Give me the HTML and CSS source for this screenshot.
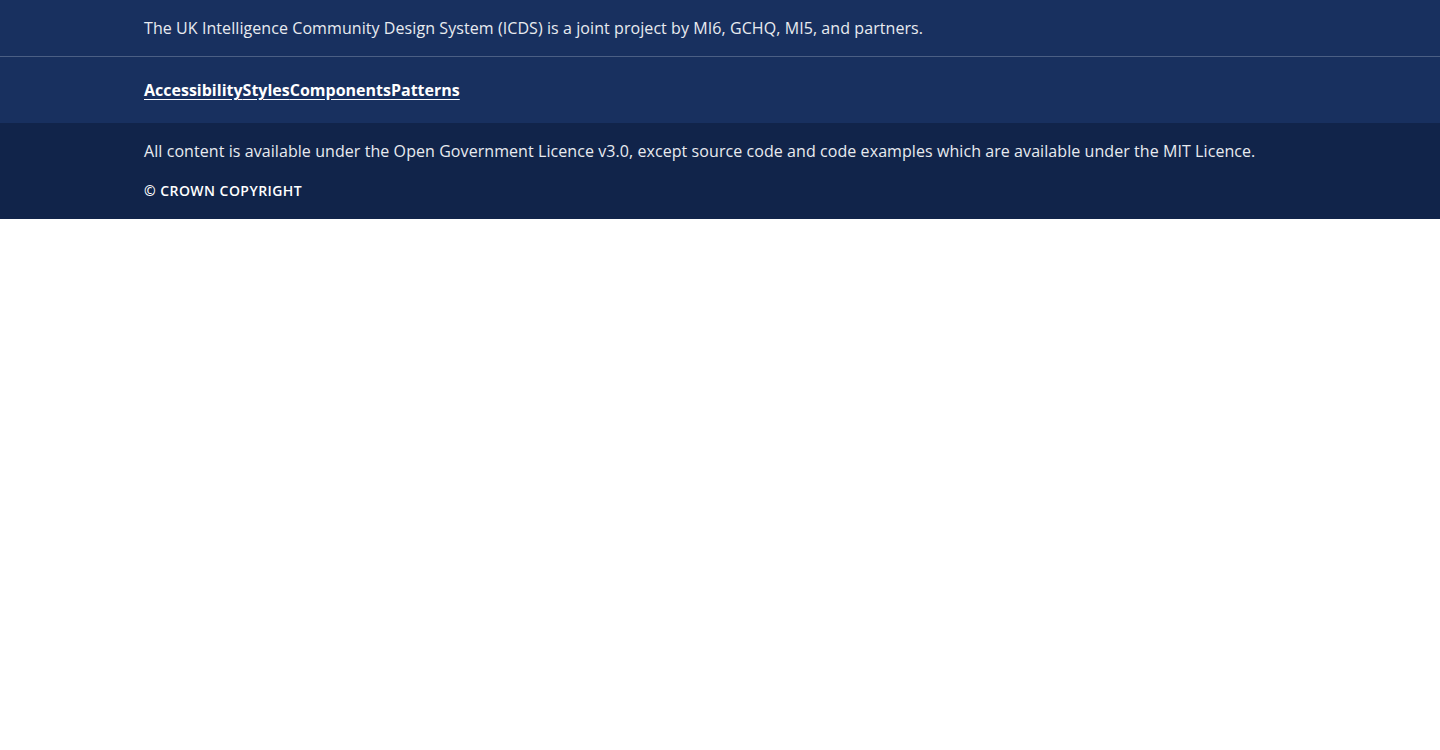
FILE: index.html
```html
<!DOCTYPE html>
<html lang="en">
<head>
<meta charset="utf-8">
<title>ICDS footer</title>
<link rel="stylesheet" href="styles.css">
</head>
<body>
<footer class="footer">
  <div class="footer-top">
    <div class="container">
      <p class="intro">The UK Intelligence Community Design System (ICDS) is a joint project by MI6, GCHQ, MI5, and partners.</p>
    </div>
  </div>
  <div class="footer-nav">
    <div class="container">
      <nav class="links">
        <a href="#">Accessibility</a><a href="#">Styles</a><a href="#">Components</a><a href="#">Patterns</a>
      </nav>
    </div>
  </div>
  <div class="footer-bottom">
    <div class="container">
      <p class="licence">All content is available under the Open Government Licence v3.0, except source code and code examples which are available under the MIT Licence.</p>
      <p class="copyright">© Crown Copyright</p>
    </div>
  </div>
</footer>
</body>
</html>
```
FILE: styles.css
```css
html, body {
  margin: 0;
  padding: 0;
  background: #ffffff;
  font-family: "Open Sans", "Noto Sans", sans-serif;
  color: #ffffff;
}
p { margin: 0; }
.container {
  max-width: 1152px;
  margin: 0 auto;
}
.footer-top {
  background: #18305f;
  padding: 16px 0;
  border-bottom: 1px solid #4b5f84;
  height: 24px;
}
.intro {
  font-size: 16px;
  line-height: 24px;
  letter-spacing: 0.075px;
  color: #e8ebf0;
}
.footer-nav {
  background: #18305f;
  padding: 21px 0;
}
.links {
  display: flex;
  line-height: 24px;
}
.links a {
  color: #ffffff;
  font-weight: 700;
  font-size: 16px;
  text-decoration: underline;
  text-underline-offset: 3px;
}
.footer-bottom {
  background: #11244a;
  padding: 16px 0 18px;
}
.licence {
  font-size: 16px;
  line-height: 24px;
  letter-spacing: 0.072px;
  color: #e8ebf0;
}
.copyright {
  margin-top: 17px;
  font-size: 14px;
  line-height: 21px;
  font-weight: 600;
  text-transform: uppercase;
  letter-spacing: 0.45px;
}
```
